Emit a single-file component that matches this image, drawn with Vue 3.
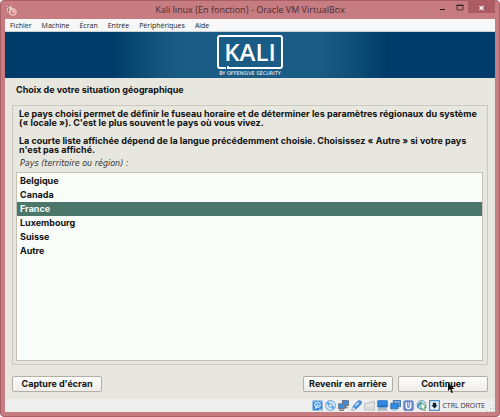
<template>
  <div class="vm-window">
    <header class="title-bar">
      <svg class="app-icon" viewBox="0 0 11 11" aria-hidden="true">
        <path d="M1 1h5l-1 2 3 1-1 2-3-1-1 3-2-1z" fill="#ead9d2" />
        <path d="M1 3l3-2M2 7l1-4" stroke="#8d5a55" fill="none" />
        <rect x="4" y="4" width="6" height="6" rx="2" fill="#d9797d" stroke="#f4dfdc" />
        <path d="M7 5v2h2" stroke="#fff" fill="none" />
      </svg>
      <h1 class="title">Kali linux [En fonction] - Oracle VM VirtualBox</h1>
      <div class="window-buttons">
        <button class="window-button" aria-label="Réduire">
          <svg viewBox="0 0 9 9"><path d="M2 6.500h5" stroke="#1f1213" /></svg>
        </button>
        <button class="window-button" aria-label="Agrandir">
          <svg viewBox="0 0 9 9">
            <path d="M2 2h6v5H2z" fill="none" stroke="#5b3336" />
            <path d="M1.500 2.500h7" stroke="#3a1d20" />
          </svg>
        </button>
        <button class="window-button close" aria-label="Fermer">
          <svg viewBox="0 0 9 9"><path d="M2.500 3l4 4M6.500 3l-4 4" stroke="#fff" stroke-width="1.200" /></svg>
        </button>
      </div>
    </header>

    <nav class="menu-bar">
      <button v-for="menu in menus" :key="menu" class="menu">{{ menu }}</button>
    </nav>

    <main class="installer">
      <div class="banner">
        <div class="logo">
          <div class="logo-box">
            <svg class="logo-frame" viewBox="0 0 66 34" aria-hidden="true">
              <path d="M9 33H3Q1 33 1 31V3Q1 1 3 1H63Q65 1 65 3V31Q65 33 63 33H11V31" fill="none" stroke="#fff" stroke-width="2" />
            </svg>
            <span class="logo-name">KALI</span>
          </div>
          <span class="logo-sub">BY OFFENSIVE SECURITY</span>
        </div>
      </div>

      <h2 class="step-title">Choix de votre situation géographique</h2>

      <section class="question">
        <p class="help">
          Le pays choisi permet de définir le fuseau horaire et de déterminer les paramètres régionaux du système
          («&nbsp;locale&nbsp;»). C'est le plus souvent le pays où vous vivez.
        </p>
        <p class="help">
          La courte liste affichée dépend de la langue précédemment choisie. Choisissez «&nbsp;Autre&nbsp;» si votre pays
          n'est pas affiché.
        </p>
        <p id="country-label" class="prompt">Pays (territoire ou région) :</p>
        <div class="country-list" role="radiogroup" aria-labelledby="country-label">
          <label
            v-for="country in countries"
            :key="country"
            class="country"
            :class="{ selected: country === selected }"
          >
            <input v-model="selected" type="radio" name="country" :value="country" />
            {{ country }}
          </label>
        </div>
      </section>

      <footer class="actions">
        <button class="action">Capture d'écran</button>
        <button class="action back">Revenir en arrière</button>
        <button class="action next">
          Continuer
          <svg class="pointer" viewBox="0 0 7 11" aria-hidden="true">
            <path d="M0 0v8l2-2 1.500 4 1.500-.6-1.500-3.400h3z" fill="#111" />
          </svg>
        </button>
      </footer>
    </main>

    <div class="status-bar">
      <!-- hard disk -->
      <svg class="status-icon" viewBox="0 0 10 10">
        <rect x=".5" y=".5" width="9" height="9" fill="#2f83d8" />
        <circle cx="5" cy="4.300" r="2.700" fill="#6fb0ee" stroke="#e4f2fd" stroke-width=".8" />
        <path d="M2.500 8.200L5.500 4.500M1.200 1.500h1M7.800 1.500h1M6.500 8.500h2" stroke="#fff" stroke-width=".9" />
      </svg>
      <!-- optical disk -->
      <svg class="status-icon" viewBox="0 0 10 10">
        <circle cx="5" cy="5" r="4.500" fill="#cfe5f8" stroke="#5c9bd8" stroke-width=".8" />
        <path d="M1.200 3.500L5 5 3 1.500zM8.800 6.500L5 5l2 3.500z" fill="#4d97e0" />
        <circle cx="5" cy="5" r="1.500" fill="#fff" stroke="#3f87cf" stroke-width=".8" />
      </svg>
      <!-- network -->
      <svg class="status-icon" viewBox="0 0 10 10">
        <rect x="4" y=".5" width="5.500" height="4.500" fill="#3a8ee4" stroke="#6b7885" stroke-width=".9" />
        <path d="M7 5v2h2M1 9.200h4.500" stroke="#59636e" fill="none" />
        <rect x=".5" y="3.500" width="5.500" height="4.200" fill="#3a8ee4" stroke="#6b7885" stroke-width=".9" />
      </svg>
      <!-- usb -->
      <svg class="status-icon" viewBox="0 0 10 10">
        <path d="M1.800 6L6 1.200Q8-.3 9.500 1.500 10 3 8.800 4.200L4.500 8.300z" fill="#3f90e2" stroke="#2c74c0" stroke-width=".5" />
        <path d="M1.800 6l2.700 2.300-2 1.300L.5 9.400z" fill="#e4edf5" stroke="#6d8fb0" stroke-width=".6" />
        <path d="M4 5.500l3-3.200" stroke="#d6eafc" stroke-width="1.200" />
      </svg>
      <!-- shared folders -->
      <svg class="status-icon" viewBox="0 0 10 10">
        <path d="M.5 9V3H5l1-1.500h3.500V9z" fill="#dedede" stroke="#b9b9b9" stroke-width=".8" />
        <path d="M1 4.500h8" stroke="#f2f2f2" />
      </svg>
      <!-- display -->
      <svg class="status-icon" viewBox="0 0 10 10">
        <rect x=".5" y=".5" width="9" height="6" rx=".6" fill="#2f8ae6" stroke="#4583c2" stroke-width=".8" />
        <path d="M1 5.500h8" stroke="#1d5fa8" />
        <path d="M1.500 7.500h7l1 2H.5z" fill="#8794a1" />
        <path d="M2 8.500h6" stroke="#dfe5ea" stroke-width=".7" />
      </svg>
      <!-- video capture -->
      <svg class="status-icon" viewBox="0 0 10 10">
        <rect x="3" y=".5" width="6.500" height="5.500" fill="#5a9fe6" stroke="#3c76b5" stroke-width=".8" />
        <rect x=".8" y="3" width="6.500" height="5" fill="#2f8ae6" stroke="#2f6cae" stroke-width=".8" />
        <path d="M4 2h4.500M1.500 9.300h5" stroke="#a4b6c8" stroke-width=".9" />
      </svg>
      <!-- features -->
      <svg class="status-icon" viewBox="0 0 10 10">
        <rect x=".8" y=".8" width="8.400" height="8.600" rx="1" fill="#6f93da" stroke="#4a68b8" stroke-width=".8" />
        <path d="M3 2v4.500q2 3 4 0V2" fill="none" stroke="#fff" stroke-width="1.200" />
        <path d="M5 2v4" stroke="#c9d8f4" stroke-width=".8" />
      </svg>
      <!-- mouse integration -->
      <svg class="status-icon" viewBox="0 0 10 10">
        <circle cx="5" cy="4.500" r="4" fill="#cfe4f0" stroke="#5d8fae" stroke-width=".8" />
        <path d="M2 7.500Q1.500 3.500 5 2.500" fill="none" stroke="#2f83c8" stroke-width="1.200" />
        <path d="M4.500 2l5 4.500-2 .3L8.500 9l-1.500.6L6 7.500 4.500 8.700z" fill="#fff" stroke="#3e8a55" stroke-width=".8" />
      </svg>
      <!-- host key -->
      <svg class="status-icon" viewBox="0 0 10 10">
        <rect x=".6" y=".6" width="8.800" height="8.800" fill="#e3f1fd" stroke="#3c7fc4" />
        <path d="M3.500 2.500h3v2.300h1.300L5 7.800 2.200 4.800h1.300z" fill="#14202e" />
      </svg>
      <span class="host-key">CTRL DROITE</span>
      <svg class="grip" viewBox="0 0 8 8" aria-hidden="true">
        <path d="M6 1h1v1H6zM6 4h1v1H6zM3 4h1v1H3zM6 7h1v1H6zM3 7h1v1H3zM0 7h1v1H0z" fill="#b4b4b4" />
      </svg>
    </div>
  </div>
</template>

<script setup>
import { ref } from 'vue'

const menus = ['Fichier', 'Machine', 'Écran', 'Entrée', 'Périphériques', 'Aide']
const countries = ['Belgique', 'Canada', 'France', 'Luxembourg', 'Suisse', 'Autre']
const selected = ref('France')
</script>

<style>
body {
  margin: 0;
  background: #fff;
}
</style>

<style scoped>
.vm-window {
  box-sizing: border-box;
  display: flex;
  flex-direction: column;
  min-height: 100vh;
  padding: 0 4px 4px;
  border: 1px solid #a95f65;
  border-radius: 4px;
  background: #c67c81;
  font-family: "Open Sans", "Noto Sans", sans-serif;
}

button {
  margin: 0;
  padding: 0;
  border: none;
  background: none;
  font-family: inherit;
}

svg {
  display: block;
}

.title-bar {
  display: grid;
  grid-template-columns: 1fr auto 1fr;
  align-items: center;
  height: 18px;
}

.app-icon {
  width: 11px;
  height: 11px;
  margin-left: 1px;
}

.title {
  margin: 0;
  font-size: 9px;
  font-weight: 400;
  line-height: 18px;
  color: #4b2c30;
}

.window-buttons {
  display: flex;
  align-self: start;
  justify-content: flex-end;
}

.window-button {
  display: flex;
  align-items: center;
  justify-content: center;
  width: 17px;
  height: 12px;
}

.window-button svg {
  width: 9px;
  height: 9px;
}

.window-button.close {
  width: 27px;
  background: #ab5b61;
}

.menu-bar {
  display: flex;
  gap: 10px;
  height: 12px;
  padding: 0 5px;
  border-bottom: 1px solid #c9d3d8;
  background: #f5f8f7;
}

.menu {
  font-size: 7px;
  font-weight: 500;
  line-height: 13px;
  color: #222;
}

.installer {
  display: flex;
  flex: 1;
  flex-direction: column;
  background: #e8e7df;
  font-family: Inter, "DejaVu Sans", sans-serif;
}

.banner {
  display: flex;
  justify-content: center;
  padding: 3px 0 1px;
  background: linear-gradient(90deg, #003c69 22%, #0d4c77 28%, #1b5c86 36%, #1b5c86 64%, #0d4c77 72%, #003c69 78%);
  color: #fff;
}

.logo {
  display: flex;
  flex-direction: column;
  align-items: center;
}

.logo-box {
  display: grid;
  place-items: center;
  width: 66px;
  height: 34px;
}

.logo-frame,
.logo-name {
  grid-area: 1 / 1;
}

.logo-frame {
  width: 66px;
  height: 34px;
}

.logo-name {
  font-family: "Open Sans", sans-serif;
  font-size: 24px;
  font-weight: 600;
  line-height: 34px;
}

.logo-sub {
  font-family: "DejaVu Sans", sans-serif;
  font-size: 5px;
  line-height: 8px;
  white-space: nowrap;
}

.step-title {
  margin: 0;
  padding: 5px 11px 7px;
  font-size: 9px;
  font-weight: 700;
  line-height: 14px;
  color: #111;
}

.question {
  display: flex;
  flex: 1;
  flex-direction: column;
  margin: 1px 7px 0;
  padding: 3px 4px 3px 3px;
  border: 1px solid #cbc8bd;
}

.help {
  margin: 0 0 9px 3px;
  font-size: 9px;
  font-weight: 700;
  line-height: 9px;
  color: #111;
}

.prompt {
  margin: -5px 4px 2px;
  font-family: "DejaVu Sans", sans-serif;
  font-size: 8px;
  font-style: italic;
  line-height: 12px;
  color: #333;
}

.country-list {
  flex: 1;
  padding: 1px 0;
  border: 1px solid #c6c0b4;
  background: #f8fdf9;
}

.country {
  display: block;
  padding: 0 3px;
  font-size: 9px;
  font-weight: 700;
  line-height: 14px;
  color: #111;
}

.country input {
  position: absolute;
  margin: 0;
  opacity: 0;
  pointer-events: none;
}

.country.selected {
  background: #4b776b;
  color: #f4faf7;
}

.actions {
  display: flex;
  gap: 5px;
  padding: 11px 7px 7px;
}

.action {
  position: relative;
  width: 90px;
  border: 1px solid #b3afa4;
  border-radius: 2px;
  background: linear-gradient(#fdfdfc, #eeede8);
  font-size: 9px;
  font-weight: 700;
  line-height: 14px;
  color: #111;
}

.action.back {
  margin-left: auto;
}

.pointer {
  position: absolute;
  top: 6px;
  left: 49px;
  width: 7px;
  height: 11px;
}

.status-bar {
  display: flex;
  align-items: center;
  justify-content: flex-end;
  gap: 2px;
  height: 13px;
  background: #efeeee;
}

.status-icon {
  width: 11px;
  height: 11px;
}

.host-key {
  font-size: 7px;
  line-height: 13px;
  color: #333;
}

.grip {
  width: 8px;
  height: 8px;
  align-self: flex-end;
}
</style>
